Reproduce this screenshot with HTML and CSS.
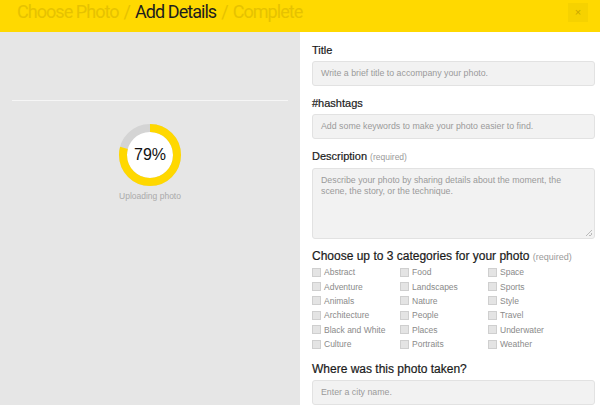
FILE: index.html
```html
<!DOCTYPE html>
<html>
<head>
<meta charset="utf-8">
<link rel="stylesheet" href="styles.css">
</head>
<body>
<div class="page">
  <header class="topbar">
    <div class="steps">
      <span class="step">Choose Photo</span>
      <span class="sep">/</span>
      <span class="step active">Add Details</span>
      <span class="sep">/</span>
      <span class="step">Complete</span>
    </div>
    <button class="close" type="button">&times;</button>
  </header>
  <main class="main">
    <section class="left">
      <div class="rule"></div>
      <div class="progress">
        <div class="ring">
          <svg width="62" height="62" viewBox="0 0 62 62">
            <circle cx="31" cy="31" r="27" fill="#fff" stroke="#d4d4d4" stroke-width="8"/>
            <circle cx="31" cy="31" r="27" fill="none" stroke="#ffd800" stroke-width="8" stroke-dasharray="134.03 200" transform="rotate(-90 31 31)"/>
          </svg>
          <span class="pct">79%</span>
        </div>
        <div class="uploading">Uploading photo</div>
      </div>
    </section>
    <section class="right">
      <div class="field">
        <label class="label">Title</label>
        <div class="input">Write a brief title to accompany your photo.</div>
      </div>
      <div class="field">
        <label class="label">#hashtags</label>
        <div class="input">Add some keywords to make your photo easier to find.</div>
      </div>
      <div class="field">
        <label class="label">Description <span class="req">(required)</span></label>
        <div class="input textarea">Describe your photo by sharing details about the moment, the scene, the story, or the technique.<span class="grip"></span></div>
      </div>
      <div class="field cats-field">
        <label class="label big">Choose up to 3 categories for your photo <span class="req">(required)</span></label>
        <div class="cats">
          <div class="cat"><span class="box"></span>Abstract</div>
          <div class="cat"><span class="box"></span>Food</div>
          <div class="cat"><span class="box"></span>Space</div>
          <div class="cat"><span class="box"></span>Adventure</div>
          <div class="cat"><span class="box"></span>Landscapes</div>
          <div class="cat"><span class="box"></span>Sports</div>
          <div class="cat"><span class="box"></span>Animals</div>
          <div class="cat"><span class="box"></span>Nature</div>
          <div class="cat"><span class="box"></span>Style</div>
          <div class="cat"><span class="box"></span>Architecture</div>
          <div class="cat"><span class="box"></span>People</div>
          <div class="cat"><span class="box"></span>Travel</div>
          <div class="cat"><span class="box"></span>Black and White</div>
          <div class="cat"><span class="box"></span>Places</div>
          <div class="cat"><span class="box"></span>Underwater</div>
          <div class="cat"><span class="box"></span>Culture</div>
          <div class="cat"><span class="box"></span>Portraits</div>
          <div class="cat"><span class="box"></span>Weather</div>
        </div>
      </div>
      <div class="field">
        <label class="label where">Where was this photo taken?</label>
        <div class="input">Enter a city name.</div>
      </div>
    </section>
  </main>
</div>
</body>
</html>
```
FILE: styles.css
```css
* { box-sizing: border-box; }
html, body { margin: 0; padding: 0; }
body {
  width: 600px;
  height: 405px;
  overflow: hidden;
  font-family: "Liberation Sans", Arial, sans-serif;
  background: #fff;
}
.page { display: flex; flex-direction: column; height: 405px; }
.topbar {
  height: 32px;
  flex: none;
  background: #ffd900;
  display: flex;
  align-items: center;
  justify-content: space-between;
  padding: 0 12px 0 17px;
}
.steps {
  font-family: Roboto, "DejaVu Sans Condensed", sans-serif;
  font-size: 18px;
  letter-spacing: -0.95px;
  color: #e6c200;
  display: flex;
  gap: 5px;
  margin-top: -9px;
}
.step.active { color: #1e1e1e; }
.close {
  width: 20px;
  height: 19px;
  border: 0;
  padding: 0;
  background: #f6d200;
  color: #c9a700;
  font-size: 11px;
  line-height: 19px;
  font-family: "Liberation Sans", Arial, sans-serif;
  margin-top: -8px;
}
.main { flex: 1; display: grid; grid-template-columns: 300px 300px; }
.left {
  background: #e6e6e6;
  padding: 68px 12px 0;
}
.rule { height: 1px; background: #f6f6f6; }
.progress {
  display: flex;
  flex-direction: column;
  align-items: center;
  margin-top: 22px;
}
.ring { position: relative; width: 62px; height: 62px; margin-top: 1px; }
.ring svg { display: block; }
.pct {
  position: absolute;
  inset: 0;
  display: flex;
  align-items: center;
  justify-content: center;
  font-size: 16px;
  color: #111;
}
.uploading { margin-top: 5px; font-size: 8.5px; color: #aaa; }
.right { padding: 12px 5px 0 12px; }
.field { margin-bottom: 11px; }
.field.cats-field { margin-bottom: 14px; }
.label {
  display: block;
  font-size: 11px;
  color: #1a1a1a;
  -webkit-text-stroke: 0.2px #1a1a1a;
  margin-bottom: 4px;
  line-height: 13px;
}
.label.big { font-size: 12px; }
.label.where { font-size: 12px; }
.req { font-size: 8.5px; color: #9a9a9a; -webkit-text-stroke: 0; }
.label.big .req { font-size: 9px; }
.input {
  height: 25px;
  background: #f2f2f2;
  border: 1px solid #e2e2e2;
  border-radius: 3px;
  font-size: 8.8px;
  color: #9a9a9a;
  padding: 0 8px;
  line-height: 23px;
}
.input.textarea {
  position: relative;
  height: 71px;
  line-height: 11px;
  padding-top: 6px;
}
.grip {
  position: absolute;
  right: 2px;
  bottom: 2px;
  width: 6px;
  height: 6px;
  background: linear-gradient(135deg, transparent 45%, #bbb 45%, #bbb 55%, transparent 55%, transparent 75%, #bbb 75%, #bbb 85%, transparent 85%);
}
.cats {
  display: grid;
  grid-template-columns: 88px 88px 1fr;
  row-gap: 4px;
  margin-top: -1px;
}
.cat {
  display: flex;
  align-items: center;
  gap: 3px;
  font-size: 8.5px;
  color: #8a8a8a;
  height: 10.4px;
}
.box {
  width: 9px;
  height: 9px;
  border: 1px solid #cfcfcf;
  background: #e4e4e4;
  flex: none;
}
```
